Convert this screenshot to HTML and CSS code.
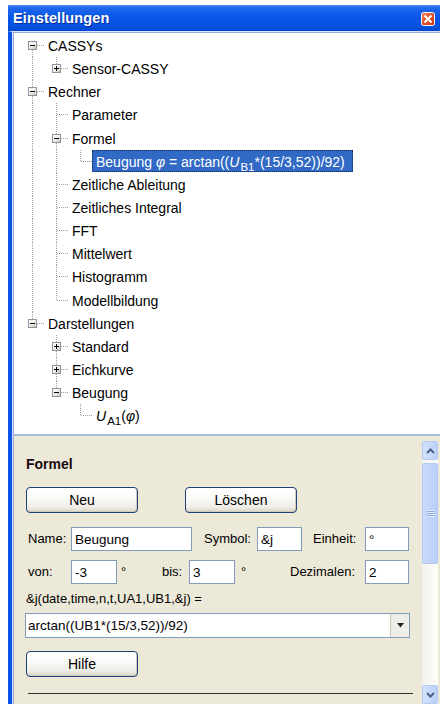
FILE: index.html
```html
<!DOCTYPE html>
<html lang="de">
<head>
<meta charset="utf-8">
<title>Einstellungen</title>
<link rel="stylesheet" href="styles.css">
</head>
<body>
<div class="window">
  <div class="titlebar">
    <span class="title">Einstellungen</span>
    <span class="close">
      <svg width="14" height="14" viewBox="0 0 14 14">
        <defs>
          <linearGradient id="cg" x1="0" y1="0" x2="1" y2="1">
            <stop offset="0" stop-color="#F08A64"/>
            <stop offset="0.5" stop-color="#E0502A"/>
            <stop offset="1" stop-color="#C23A18"/>
          </linearGradient>
        </defs>
        <rect x="0.5" y="0.5" width="13" height="13" rx="2" fill="url(#cg)" stroke="#F4F4F4"/>
        <path d="M4.2 4.2 L9.8 9.8 M9.8 4.2 L4.2 9.8" stroke="#fff" stroke-width="2" stroke-linecap="square"/>
      </svg>
    </span>
  </div>

  <div class="frame">
    <div class="tree">
      <div class="row">
        <span class="cell first"><span class="box minus"></span></span>
        <span class="label">CASSYs</span>
      </div>
      <div class="row">
        <span class="cell pipe"></span>
        <span class="cell ell"><span class="box plus"></span></span>
        <span class="label">Sensor-CASSY</span>
      </div>
      <div class="row">
        <span class="cell tee"><span class="box minus"></span></span>
        <span class="label">Rechner</span>
      </div>
      <div class="row">
        <span class="cell pipe"></span>
        <span class="cell tee"></span>
        <span class="label">Parameter</span>
      </div>
      <div class="row">
        <span class="cell pipe"></span>
        <span class="cell tee"><span class="box minus"></span></span>
        <span class="label">Formel</span>
      </div>
      <div class="row">
        <span class="cell pipe"></span>
        <span class="cell pipe"></span>
        <span class="cell ell"></span>
        <span class="label selected">Beugung <i>φ</i> = arctan((<i>U</i><sub>B1</sub>*(15/3,52))/92)</span>
      </div>
      <div class="row">
        <span class="cell pipe"></span>
        <span class="cell tee"></span>
        <span class="label">Zeitliche Ableitung</span>
      </div>
      <div class="row">
        <span class="cell pipe"></span>
        <span class="cell tee"></span>
        <span class="label">Zeitliches Integral</span>
      </div>
      <div class="row">
        <span class="cell pipe"></span>
        <span class="cell tee"></span>
        <span class="label">FFT</span>
      </div>
      <div class="row">
        <span class="cell pipe"></span>
        <span class="cell tee"></span>
        <span class="label">Mittelwert</span>
      </div>
      <div class="row">
        <span class="cell pipe"></span>
        <span class="cell tee"></span>
        <span class="label">Histogramm</span>
      </div>
      <div class="row">
        <span class="cell pipe"></span>
        <span class="cell ell"></span>
        <span class="label">Modellbildung</span>
      </div>
      <div class="row">
        <span class="cell ell"><span class="box minus"></span></span>
        <span class="label">Darstellungen</span>
      </div>
      <div class="row">
        <span class="cell"></span>
        <span class="cell tee"><span class="box plus"></span></span>
        <span class="label">Standard</span>
      </div>
      <div class="row">
        <span class="cell"></span>
        <span class="cell tee"><span class="box plus"></span></span>
        <span class="label">Eichkurve</span>
      </div>
      <div class="row">
        <span class="cell"></span>
        <span class="cell ell"><span class="box minus"></span></span>
        <span class="label">Beugung</span>
      </div>
      <div class="row">
        <span class="cell"></span>
        <span class="cell"></span>
        <span class="cell ell"></span>
        <span class="label"><i>U</i><sub>A1</sub>(<i>φ</i>)</span>
      </div>
    </div>

    <div class="editor">
      <div class="form">
        <div class="heading">Formel</div>

        <div class="buttons">
          <button class="btn">Neu</button>
          <button class="btn">Löschen</button>
        </div>

        <div class="fields">
          <span class="lbl lbl-name">Name:</span>
          <input class="field f-name" type="text" value="Beugung">
          <span class="lbl lbl-symbol">Symbol:</span>
          <input class="field f-symbol" type="text" value="&amp;j">
          <span class="lbl lbl-unit">Einheit:</span>
          <input class="field f-unit" type="text" value="°">
        </div>

        <div class="fields range">
          <span class="lbl lbl-name">von:</span>
          <input class="field f-num" type="text" value="-3">
          <span class="lbl deg deg-from">°</span>
          <span class="lbl lbl-to">bis:</span>
          <input class="field f-num" type="text" value="3">
          <span class="lbl deg deg-to">°</span>
          <span class="lbl lbl-dec">Dezimalen:</span>
          <input class="field f-unit" type="text" value="2">
        </div>

        <div class="formula-label">&amp;j(date,time,n,t,UA1,UB1,&amp;j) =</div>

        <div class="combo">
          <span class="combo-text">arctan((UB1*(15/3,52))/92)</span>
          <span class="combo-btn">
            <svg width="9" height="5" viewBox="0 0 9 5"><path d="M1 0 H8 L4.5 4.5 Z" fill="#222"/></svg>
          </span>
        </div>

        <button class="btn btn-help">Hilfe</button>

        <div class="rule"></div>
      </div>

      <div class="vscroll">
        <span class="sb-btn">
          <svg width="9" height="6" viewBox="0 0 9 6"><path d="M1 5 L4.5 1.5 L8 5" fill="none" stroke="#4D6185" stroke-width="2"/></svg>
        </span>
        <span class="sb-thumb"><span class="grip"></span></span>
        <span class="sb-track"></span>
        <span class="sb-btn">
          <svg width="9" height="6" viewBox="0 0 9 6"><path d="M1 1 L4.5 4.5 L8 1" fill="none" stroke="#4D6185" stroke-width="2"/></svg>
        </span>
      </div>
    </div>
  </div>
</div>
</body>
</html>
```

FILE: styles.css
```css
* {
  box-sizing: border-box;
}

html,
body {
  margin: 0;
  height: 100%;
}

body {
  background: #fff;
  padding: 5px 0 0 8px;
  overflow: hidden;
  font-family: "Liberation Sans", Arial, sans-serif;
  color: #000;
}

/* ---------- window chrome ---------- */

.window {
  width: 432px;
  height: 706px;
  display: flex;
  flex-direction: column;
}

.titlebar {
  height: 26px;
  flex: none;
  display: flex;
  align-items: center;
  justify-content: space-between;
  padding: 0 5px;
  background: linear-gradient(to bottom,
      #4A8CF6 0,
      #2068EE 3px,
      #0B58E8 40%,
      #0652E2 80%,
      #0448D2 100%);
}

.title {
  color: #fff;
  font-weight: bold;
  font-size: 14.5px;
  letter-spacing: 0.1px;
  text-shadow: 1px 1px 0 #0A2C98;
}

.close {
  display: flex;
  margin-top: 2px;
}

.frame {
  flex: 1;
  display: flex;
  flex-direction: column;
  border-left: 4px solid #0A55E5;
  border-bottom: 7px solid #0A55E5;
  border-top: 1px solid #D8E2F6;
  padding-left: 1px;
  background: #D8E2F6;
}

/* ---------- tree view ---------- */

.tree {
  height: 404px;
  flex: none;
  background: #fff;
  border-top: 1px solid #98AAD0;
  border-left: 1px solid #98AAD0;
  border-bottom: 2px solid #A9BBD6;
  padding: 1px 0 0 6px;
  font-size: 14px;
}

.row {
  display: flex;
  align-items: flex-start;
  height: 23.15px;
  white-space: nowrap;
}

.cell {
  position: relative;
  flex: none;
  width: 24px;
  height: 100%;
}

.cell::before,
.cell::after {
  content: "";
  position: absolute;
}

/* vertical connector */
.pipe::before,
.tee::before,
.ell::before,
.first::before {
  left: 12px;
  width: 1px;
  background: repeating-linear-gradient(to bottom, #A0A0A0 0 1px, transparent 1px 2px);
}

.pipe::before,
.tee::before {
  top: 0;
  bottom: 0;
}

.ell::before {
  top: 0;
  height: 12px;
}

.first::before {
  top: 12px;
  bottom: 0;
}

/* horizontal connector */
.tee::after,
.ell::after,
.first::after {
  left: 13px;
  right: 0;
  top: 11px;
  height: 1px;
  background: repeating-linear-gradient(to right, #A0A0A0 0 1px, transparent 1px 2px);
}

.box {
  position: absolute;
  z-index: 1;
  left: 8px;
  top: 7px;
  width: 9px;
  height: 9px;
  border: 1px solid #8A96A6;
  background: linear-gradient(135deg, #FFFFFF 0%, #F2F0EA 50%, #C8C3B4 100%);
}

.box::before,
.box::after {
  content: "";
  position: absolute;
  background: #000;
}

.box::before {
  left: 1px;
  top: 3px;
  width: 5px;
  height: 1px;
}

.plus::after {
  left: 3px;
  top: 1px;
  width: 1px;
  height: 5px;
}

.label {
  margin-left: 0;
  padding: 0 3px;
  height: 22.5px;
  line-height: 22px;
  border: 1px solid transparent;
}

.label i {
  font-style: italic;
}

.label sub {
  font-size: 11.5px;
  vertical-align: -4px;
  line-height: 0;
  margin-left: 1px;
}

.label.selected {
  padding: 0 7px 0 3px;
  background: #316AC5;
  color: #fff;
  border: 1px dotted #0C2460;
}

/* ---------- formula editor ---------- */

.editor {
  flex: 1;
  display: flex;
  background: #ECE9D8;
  border-left: 1px solid #98AAD0;
  padding-right: 2px;
  overflow: hidden;
}

.form {
  flex: 1;
  padding: 20px 0 0 12px;
  font-size: 13px;
}

.heading {
  font-weight: bold;
  font-size: 14px;
  line-height: 16px;
  color: #1A0A10;
}

.buttons {
  display: flex;
  gap: 47px;
  margin-top: 15px;
}

.btn {
  display: block;
  width: 112px;
  height: 26px;
  padding: 0;
  font-family: "Liberation Sans", Arial, sans-serif;
  font-size: 14px;
  color: #000;
  border: 1px solid #1E3F78;
  border-radius: 4px;
  background: linear-gradient(to bottom,
      #FFFFFF 0%,
      #FAFAF8 40%,
      #EEEDE6 80%,
      #D8D4C6 100%);
  box-shadow: inset -1px -1px 0 #D0CBBB;
}

.fields {
  display: flex;
  align-items: center;
  margin-top: 14px;
  height: 24px;
}

.fields.range {
  margin-top: 9px;
}

.lbl {
  flex: none;
  line-height: 24px;
}

.lbl-name {
  width: 45px;
  padding-left: 2px;
}

.lbl-symbol {
  width: 65px;
  padding-left: 12px;
}

.lbl-unit {
  width: 63px;
  padding-left: 11px;
}

.deg-from {
  width: 45px;
  padding-left: 4px;
}

.lbl-to {
  width: 27px;
}

.deg-to {
  width: 55px;
  padding-left: 6px;
}

.lbl-dec {
  width: 75px;
}

.field {
  flex: none;
  height: 24px;
  margin: 0;
  padding: 0 3px;
  border: 1px solid #7F9DB9;
  background: #fff;
  font-family: "Liberation Sans", Arial, sans-serif;
  font-size: 13.5px;
  color: #000;
  outline: none;
}

.f-name {
  width: 121px;
}

.f-symbol {
  width: 45px;
}

.f-unit {
  width: 44px;
}

.f-num {
  width: 46px;
}

.formula-label {
  margin-top: 7px;
  line-height: 16px;
}

.combo {
  display: flex;
  align-items: stretch;
  width: 385px;
  height: 25px;
  margin: 6px 0 0 -1px;
  border: 1px solid #7F9DB9;
  background: #fff;
}

.combo-text {
  flex: 1;
  padding-left: 2px;
  line-height: 23px;
  font-size: 13.5px;
}

.combo-btn {
  width: 19px;
  display: flex;
  align-items: center;
  justify-content: center;
  background: #EEEDE7;
  border-left: 1px solid #C9C7BA;
}

.btn-help {
  margin-top: 13px;
}

.rule {
  margin: 16px 0 0 2px;
  width: 385px;
  border-top: 1px solid #333;
}

/* ---------- vertical scrollbar ---------- */

.vscroll {
  flex: none;
  width: 16px;
  margin-top: 5px;
  display: flex;
  flex-direction: column;
  background: linear-gradient(to right, #F3F1EC, #FEFEFB);
}

.sb-btn {
  flex: none;
  height: 19px;
  display: flex;
  align-items: center;
  justify-content: center;
  border: 1px solid #B4C8F6;
  border-radius: 2px;
  background: linear-gradient(to right, #D4E1FD, #BCD0FA);
}

.sb-thumb {
  flex: none;
  height: 101px;
  margin-top: 3px;
  display: flex;
  align-items: center;
  justify-content: center;
  border: 1px solid #B4C8F6;
  border-radius: 2px;
  background: linear-gradient(to right, #CADAFD, #B9CEF9);
}

.grip {
  width: 7px;
  height: 7px;
  background: repeating-linear-gradient(to bottom, #E8EFFE 0 1px, #8CA6DC 1px 2px);
}

.sb-track {
  flex: 1;
}
```
